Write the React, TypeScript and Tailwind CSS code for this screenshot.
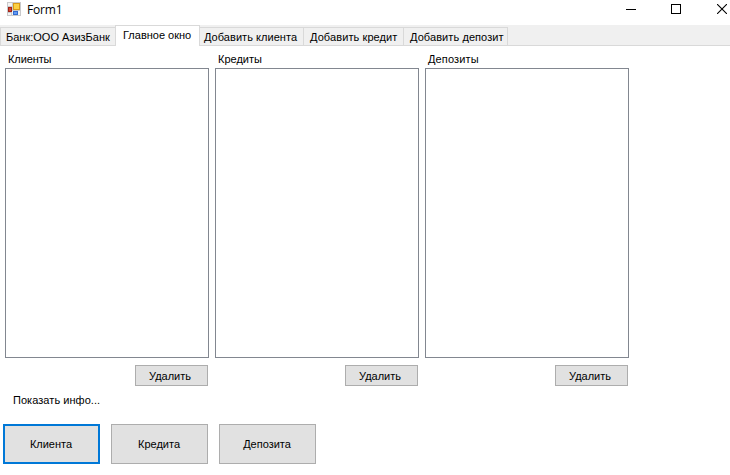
const columns = [
  { title: 'Клиенты', spacing: 'tracking-[-0.1px]' },
  { title: 'Кредиты', spacing: 'tracking-[0px]' },
  { title: 'Депозиты', spacing: 'tracking-[0.15px]' },
];

const inactiveTabs = [
  { title: 'Добавить клиента', width: 'w-[104px]', style: 'pl-[4px] tracking-[0.04px]' },
  { title: 'Добавить кредит', width: 'w-[100px]', style: 'pl-[6px] tracking-[0.09px]' },
  { title: 'Добавить депозит', width: 'w-[104px]', style: 'pl-[6px] tracking-[0.08px]' },
];

function FormIcon() {
  return (
    <svg width="14" height="14" viewBox="0 0 14 14" shapeRendering="crispEdges">
      <rect width="14" height="14" fill="#c9c9cb" />
      <rect x="1" y="1" width="4" height="3" fill="#f4f4f4" />
      <rect x="1" y="11" width="3" height="2" fill="#f4f4f4" />
      <rect x="5" y="9" width="8" height="4" fill="#f4f4f4" />
      <rect x="6" y="1" width="7" height="7" fill="#d99a18" />
      <rect x="7" y="2" width="5" height="5" fill="#fbd043" />
      <rect x="1" y="5" width="4" height="5" fill="#a42318" />
      <rect x="2" y="6" width="2" height="3" fill="#d64831" />
      <rect x="6" y="9" width="5" height="4" fill="#326bd0" />
      <rect x="7" y="10" width="3" height="2" fill="#639af5" />
    </svg>
  );
}

function TitleBar() {
  return (
    <header className="flex h-[25px] items-start pt-[2px] pl-[7px]">
      <FormIcon />
      <span className="ml-[6px] font-['Open_Sans',sans-serif] text-[12px] leading-4 tracking-[-0.15px]">Form1</span>
      <div className="mr-[3px] ml-auto flex gap-[35px] pt-[2px]">
        <svg width="10" height="10" shapeRendering="crispEdges"><path d="M0 5.5H10" stroke="#000" /></svg>
        <svg width="10" height="10" shapeRendering="crispEdges"><rect x=".5" y=".5" width="9" height="9" fill="none" stroke="#000" /></svg>
        <svg className="ml-px" width="10" height="10"><path d="M0 0 10 10M10 0 0 10" stroke="#000" strokeWidth="1.1" /></svg>
      </div>
    </header>
  );
}

function Tabs() {
  return (
    <nav className="flex h-[21px] items-end border-b border-[#d9d9d9] bg-[#f0f0f0]">
      <button className="h-[18px] w-[115px] border-t border-l border-[#d9d9d9] pl-[5px] text-left whitespace-nowrap">Банк:ООО АзизБанк</button>
      <button className="relative -mb-px h-[21px] w-[85px] border-x border-t border-[#d9d9d9] bg-white pb-[2px] pl-[7px] text-left whitespace-nowrap">Главное окно</button>
      {inactiveTabs.map((tab) => (
        <button key={tab.title} className={`h-[18px] border-t border-r border-[#d9d9d9] text-left whitespace-nowrap ${tab.width} ${tab.style}`}>{tab.title}</button>
      ))}
    </nav>
  );
}

export default function App() {
  return (
    <div className="h-[475px] w-[730px] overflow-hidden bg-white font-['Liberation_Sans',Arial,sans-serif] text-[11px] leading-[14px] text-black">
      <TitleBar />
      <Tabs />
      <main>
        <div className="flex gap-[6px] pt-[6px] pl-[5px]">
          {columns.map((column) => (
            <section key={column.title} className="flex w-[204px] flex-col">
              <h2 className={`h-4 pl-[3px] ${column.spacing}`}>{column.title}</h2>
              <div className="h-[290px] border border-[#828790]" />
              <button className="mt-[7px] mr-px h-[21px] w-[73px] self-end border border-[#adadad] bg-[#e1e1e1] pr-[3px]">Удалить</button>
            </section>
          ))}
        </div>
        <p className="mt-[7px] pl-[13px] tracking-[0.05px]">Показать инфо...</p>
        <div className="mt-[17px] flex gap-[11px] pl-[3px]">
          <button className="h-10 w-[97px] border-2 border-[#0078d7] bg-[#e1e1e1] pr-px">Клиента</button>
          <button className="h-10 w-[97px] border border-[#adadad] bg-[#e1e1e1] pr-px">Кредита</button>
          <button className="h-10 w-[97px] border border-[#adadad] bg-[#e1e1e1] pr-px">Депозита</button>
        </div>
      </main>
    </div>
  );
}
